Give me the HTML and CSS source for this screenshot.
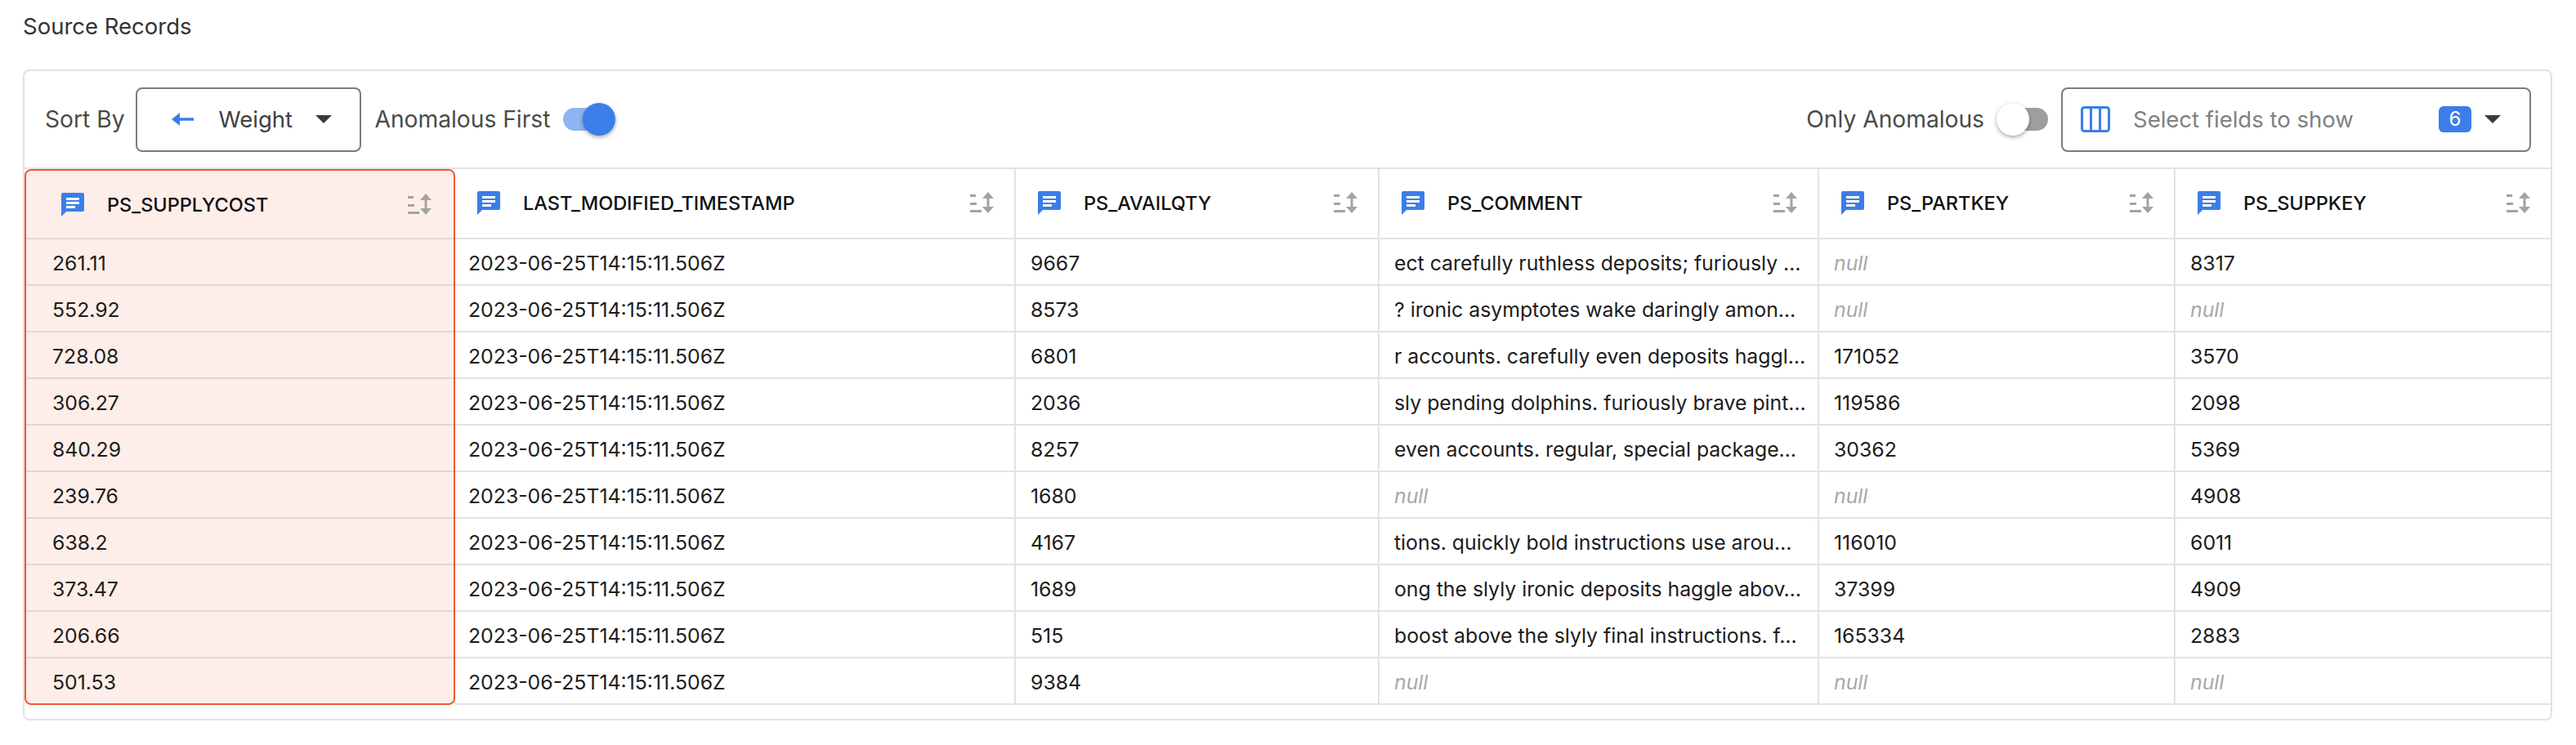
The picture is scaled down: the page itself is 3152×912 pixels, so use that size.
FILE: index.html
```html
<!DOCTYPE html>
<html lang="en">
<head>
<meta charset="utf-8">
<title>Source Records</title>
<link rel="stylesheet" href="styles.css">
</head>
<body>
<h2 class="title">Source Records</h2>
<section class="card">
  <div class="toolbar">
    <div class="group">
      <span class="label">Sort By</span>
      <button class="select sort-select">
        <svg class="arrow" viewBox="0 0 28 24"><path d="M11 4 1 12l10 8v-6.2h17v-3.6H11z"/></svg>
        <span class="value">Weight</span>
        <svg class="caret" viewBox="0 0 20 10"><path d="M0 0h20L10 10z"/></svg>
      </button>
      <span class="label">Anomalous First</span>
      <span class="toggle on"><span class="thumb"></span></span>
    </div>
    <div class="group">
      <span class="label">Only Anomalous</span>
      <span class="toggle off"><span class="thumb"></span></span>
      <button class="select fields-select">
        <svg class="columns" viewBox="0 0 36 32"><rect x="1.5" y="1.5" width="33" height="29" rx="3"/><path d="M12.5 1.500v29M23.500 1.500v29"/></svg>
        <span class="placeholder">Select fields to show</span>
        <span class="badge">6</span>
        <svg class="caret" viewBox="0 0 20 10"><path d="M0 0h20L10 10z"/></svg>
      </button>
    </div>
  </div>
  <div class="table">
    <svg class="defs" width="0" height="0"><defs>
      <symbol id="doc" viewBox="0 0 30 30"><path fill="#3b7eea" d="M3 1h24a2 2 0 0 1 2 2v19a2 2 0 0 1-2 2H7l-6 6V3a2 2 0 0 1 2-2z"/><path fill="#fff" d="M7 7h16v3H7zM7 12h16v3H7zM7 17h11v3H7z"/></symbol>
      <symbol id="sort" viewBox="0 0 30 26"><path fill="#a3a3a3" d="M0 3h7v3H0zM0 13h8v3H0zM0 22h14v3H0z"/><path fill="#a3a3a3" d="M22 0l7 8h-5.500v10H29l-7 8-7-8h5.500V8H15z"/></symbol>
    </defs></svg>
    <div class="col col-cost anomalous">
      <div class="head"><svg class="doc"><use href="#doc"/></svg><span class="name">PS_SUPPLYCOST</span><svg class="sort"><use href="#sort"/></svg></div>
      <div class="cell">261.11</div><div class="cell">552.92</div><div class="cell">728.08</div><div class="cell">306.27</div><div class="cell">840.29</div><div class="cell">239.76</div><div class="cell">638.2</div><div class="cell">373.47</div><div class="cell">206.66</div><div class="cell">501.53</div>
    </div>
    <div class="col col-ts">
      <div class="head"><svg class="doc"><use href="#doc"/></svg><span class="name">LAST_MODIFIED_TIMESTAMP</span><svg class="sort"><use href="#sort"/></svg></div>
      <div class="cell">2023-06-25T14:15:11.506Z</div><div class="cell">2023-06-25T14:15:11.506Z</div><div class="cell">2023-06-25T14:15:11.506Z</div><div class="cell">2023-06-25T14:15:11.506Z</div><div class="cell">2023-06-25T14:15:11.506Z</div><div class="cell">2023-06-25T14:15:11.506Z</div><div class="cell">2023-06-25T14:15:11.506Z</div><div class="cell">2023-06-25T14:15:11.506Z</div><div class="cell">2023-06-25T14:15:11.506Z</div><div class="cell">2023-06-25T14:15:11.506Z</div>
    </div>
    <div class="col col-qty">
      <div class="head"><svg class="doc"><use href="#doc"/></svg><span class="name">PS_AVAILQTY</span><svg class="sort"><use href="#sort"/></svg></div>
      <div class="cell">9667</div><div class="cell">8573</div><div class="cell">6801</div><div class="cell">2036</div><div class="cell">8257</div><div class="cell">1680</div><div class="cell">4167</div><div class="cell">1689</div><div class="cell">515</div><div class="cell">9384</div>
    </div>
    <div class="col col-comment">
      <div class="head"><svg class="doc"><use href="#doc"/></svg><span class="name">PS_COMMENT</span><svg class="sort"><use href="#sort"/></svg></div>
      <div class="cell">ect carefully ruthless deposits; furiously …</div>
      <div class="cell">? ironic asymptotes wake daringly amon…</div>
      <div class="cell">r accounts. carefully even deposits haggl…</div>
      <div class="cell">sly pending dolphins. furiously brave pint…</div>
      <div class="cell">even accounts. regular, special package…</div>
      <div class="cell null">null</div>
      <div class="cell">tions. quickly bold instructions use arou…</div>
      <div class="cell">ong the slyly ironic deposits haggle abov…</div>
      <div class="cell">boost above the slyly final instructions. f…</div>
      <div class="cell null">null</div>
    </div>
    <div class="col col-part">
      <div class="head"><svg class="doc"><use href="#doc"/></svg><span class="name">PS_PARTKEY</span><svg class="sort"><use href="#sort"/></svg></div>
      <div class="cell null">null</div><div class="cell null">null</div><div class="cell">171052</div><div class="cell">119586</div><div class="cell">30362</div><div class="cell null">null</div><div class="cell">116010</div><div class="cell">37399</div><div class="cell">165334</div><div class="cell null">null</div>
    </div>
    <div class="col col-supp">
      <div class="head"><svg class="doc"><use href="#doc"/></svg><span class="name">PS_SUPPKEY</span><svg class="sort"><use href="#sort"/></svg></div>
      <div class="cell">8317</div><div class="cell null">null</div><div class="cell">3570</div><div class="cell">2098</div><div class="cell">5369</div><div class="cell">4908</div><div class="cell">6011</div><div class="cell">4909</div><div class="cell">2883</div><div class="cell null">null</div>
    </div>
  </div>
</section>
</body>
</html>
```
FILE: styles.css
```css
* { box-sizing: border-box; }
html, body { margin: 0; background: #fff; }
body { padding: 0 29px 0 28px; font-family: Inter, "Liberation Sans", sans-serif; color: #1c1c1c; }
.title { margin: 0; height: 85px; padding-top: 17px; font-size: 27.5px; line-height: 30px; font-weight: 400; color: #333; }
.card { height: 797px; border: 2px solid #e2e2e2; border-radius: 8px; }
.toolbar { height: 120px; display: flex; justify-content: space-between; align-items: center; padding: 0 24px 0 25px; border-bottom: 2px solid #e2e2e2; }
.group { display: flex; align-items: center; }
.label { font-size: 28.2px; color: #4a4a4a; white-space: nowrap; }
.select { height: 79px; display: flex; align-items: center; background: #fff; border: 2px solid #7c7c7c; border-radius: 8px; padding: 0; font-family: inherit; font-size: 27.5px; }
.sort-select { width: 276px; padding-left: 41px; margin: 0 16px 0 14px; }
.arrow { width: 28px; height: 24px; fill: #3b7eea; }
.value { margin-left: 30px; color: #404040; }
.caret { width: 20px; height: 10px; fill: #3a3a3a; margin-left: 28px; }
.toggle { position: relative; display: block; height: 28px; border-radius: 14px; }
.toggle .thumb { position: absolute; top: -6px; width: 40px; height: 40px; border-radius: 50%; box-shadow: 0 2px 5px rgba(0,0,0,.35); }
.toggle.on { background: #8fb4f2; margin-left: 16px; width: 55px; }
.toggle.on .thumb { right: -9px; background: #3b7eea; }
.toggle.off { background: #9e9e9e; margin: 0 16px 0 31px; width: 47px; }
.toggle.off .thumb { left: -16px; background: #fff; }
.fields-select { width: 575px; padding-left: 22px; }
.columns { width: 36px; height: 32px; fill: none; stroke: #3b7eea; stroke-width: 3; }
.placeholder { margin-left: 28px; color: #808080; }
.badge { margin-left: auto; width: 40px; height: 32px; border-radius: 6px; background: #3b7eea; color: #fff; font-size: 24px; line-height: 32px; text-align: center; }
.fields-select .caret { margin: 0 35px 0 16px; }
.table { display: flex; }
.defs { position: absolute; }
.col { flex: none; border-right: 2px solid #e2e2e2; }
.col:last-child { border-right: 0; flex: 1; min-width: 0; }
.col-cost { width: 527px; background: #fdeeea; border: 2px solid #f15a2e; border-radius: 8px; overflow: hidden; }
.col-ts { width: 686px; }
.col-qty { width: 445px; }
.col-comment { width: 538px; }
.col-part { width: 436px; }
.head { height: 86px; display: flex; align-items: center; padding: 0 16px 2px 26px; border-bottom: 2px solid #e2e2e2; }
.col-cost .head { height: 84px; padding: 0 14px 0 42px; border-bottom-color: #e3d6d3; }
.doc { flex: none; width: 30px; height: 30px; }
.name { margin-left: 27px; font-size: 23.5px; font-weight: 500; color: #111; flex: 1; white-space: nowrap; }
.sort { flex: none; width: 30px; height: 26px; margin-right: 8px; }
.col-cost .sort { margin-right: 12px; }
.cell { height: 57px; display: flex; align-items: center; padding: 2px 0 0 18px; font-size: 24.8px; color: #1c1c1c; white-space: nowrap; border-bottom: 2px solid #e2e2e2; }
.col-ts .cell { padding-left: 16px; }
.col-cost .cell { padding-left: 32px; border-bottom-color: #e3d6d3; }
.col-cost .cell:last-child { height: 55px; border-bottom: 0; }
.null { font-style: italic; color: #a8a8a8; }
```
